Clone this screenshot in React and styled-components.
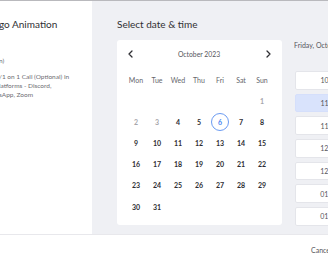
import React from "react";
import styled, { createGlobalStyle } from "styled-components";

const Global = createGlobalStyle`
  html, body { margin: 0; padding: 0; overflow: hidden; background: #fff; }
  body { width: 328px; height: 264px; font-family: "Lato", "Noto Sans", sans-serif; }
  * { box-sizing: border-box; }
`;

const Modal = styled.div`
  width: 328px;
  height: 264px;
  display: flex;
  flex-direction: column;
  border-top: 1px solid #b9b9bd;
  background: #fff;
  overflow: hidden;
`;

const Body = styled.div`
  display: flex;
  height: 233px;
  flex-shrink: 0;
`;

const Summary = styled.div`
  width: 92px;
  flex-shrink: 0;
  overflow: hidden;
  padding-top: 16px;
  white-space: nowrap;
`;

const ServiceTitle = styled.div`
  margin-left: -1px;
  font-size: 10px;
  line-height: 14px;
  color: #2f2f33;
`;

const Meta = styled.div`
  margin-left: -1px;
  margin-top: ${(p) => p.$gap || 0}px;
  font-size: 6.5px;
  line-height: 9px;
  color: #6c6c72;
`;

const Scheduler = styled.div`
  flex: 1;
  min-width: 0;
  background: #eff0f4;
  padding: 16px 0 0 25px;
`;

const Heading = styled.div`
  font-size: 10px;
  line-height: 14px;
  color: #2f2f33;
`;

const Content = styled.div`
  display: flex;
  align-items: flex-start;
  gap: 11px;
  margin-top: 9px;
`;

const Card = styled.div`
  width: 165px;
  height: 185px;
  flex-shrink: 0;
  background: #fff;
  border-radius: 3px;
  padding: 7px 9.5px 0 8.5px;
`;

const MonthBar = styled.div`
  display: flex;
  align-items: center;
  justify-content: space-between;
  height: 14px;
  margin: 0 -2px;
  padding: 0 2.5px;
  font-size: 6.8px;
  color: #55555b;
`;

const NavButton = styled.span`
  display: flex;
  align-items: center;
  justify-content: center;
  width: 8px;
  height: 10px;
`;

const Grid = styled.div`
  display: grid;
  grid-template-columns: repeat(7, 21px);
  grid-template-rows: 20px;
  grid-auto-rows: 21.2px;
  margin-top: 9px;
`;

const WeekDay = styled.div`
  display: flex;
  align-items: center;
  justify-content: center;
  font-size: 7px;
  color: #66666c;
`;

const Day = styled.div`
  display: flex;
  align-items: center;
  justify-content: center;
  font-size: 7px;
  font-weight: 700;
  color: ${(p) => (p.$muted ? "#a6a6ab" : p.$selected ? "#4a85f0" : "#2e2e33")};
`;

const DayMark = styled.span`
  display: flex;
  align-items: center;
  justify-content: center;
  width: 18px;
  height: 18px;
  border-radius: 50%;
  border: ${(p) => (p.$selected ? "1.5px solid #6b9bf2" : "none")};
`;

const TimeColumn = styled.div`
  width: 100px;
  flex-shrink: 0;
`;

const DateLabel = styled.div`
  margin-left: 1px;
  font-size: 7px;
  line-height: 10px;
  color: #55555b;
  white-space: nowrap;
`;

const SlotList = styled.div`
  display: flex;
  flex-direction: column;
  gap: 4.2px;
  margin-top: 21px;
  margin-left: 2px;
  height: 159px;
  overflow: hidden;
`;

const Slot = styled.div`
  flex-shrink: 0;
  width: 78px;
  height: 18.5px;
  border-radius: 2px;
  border: 1px solid ${(p) => (p.$active ? "#d5dffb" : "#e4e5ea")};
  background: ${(p) => (p.$active ? "#d9e3fc" : "#fff")};
  display: flex;
  align-items: center;
  justify-content: center;
  font-size: 7px;
  color: #55555b;
`;

const Footer = styled.div`
  flex: 1;
  border-top: 1px solid #e8e8ec;
  display: flex;
  align-items: center;
  padding-left: 311px;
  white-space: nowrap;
`;

const CancelButton = styled.span`
  font-size: 7px;
  color: #55555b;
`;

const Chevron = ({ dir }) => (
  <svg width="5" height="8" viewBox="0 0 5 8">
    <path
      d={dir === "left" ? "M4 1 L1 4 L4 7" : "M1 1 L4 4 L1 7"}
      fill="none"
      stroke="#2e2e33"
      strokeWidth="1.3"
      strokeLinecap="round"
      strokeLinejoin="round"
    />
  </svg>
);

const weekDays = ["Mon", "Tue", "Wed", "Thu", "Fri", "Sat", "Sun"];
const slots = ["10:30am", "11:00am", "11:30am", "12:00pm", "12:30pm", "01:00pm", "01:30pm", "02:00pm"];

export default function App() {
  const cells = [];
  for (let i = 0; i < 6; i++) cells.push(null);
  for (let d = 1; d <= 31; d++) cells.push(d);

  return (
    <>
      <Global />
      <Modal>
        <Body>
          <Summary>
            <ServiceTitle>go Animation</ServiceTitle>
            <Meta $gap={25}>n)</Meta>
            <Meta $gap={7}>/1 on 1 Call (Optional) in</Meta>
            <Meta>latforms - Discord,</Meta>
            <Meta>sApp, Zoom</Meta>
          </Summary>
          <Scheduler>
            <Heading>Select date &amp; time</Heading>
            <Content>
              <Card>
                <MonthBar>
                  <NavButton><Chevron dir="left" /></NavButton>
                  <span>October 2023</span>
                  <NavButton><Chevron dir="right" /></NavButton>
                </MonthBar>
                <Grid>
                  {weekDays.map((w) => (
                    <WeekDay key={w}>{w}</WeekDay>
                  ))}
                  {cells.map((d, i) => (
                    <Day key={i} $muted={d !== null && d < 4} $selected={d === 6}>
                      {d !== null && <DayMark $selected={d === 6}>{d}</DayMark>}
                    </Day>
                  ))}
                </Grid>
              </Card>
              <TimeColumn>
                <DateLabel>Friday, October 6</DateLabel>
                <SlotList>
                  {slots.map((s, i) => (
                    <Slot key={s} $active={i === 1}>{s}</Slot>
                  ))}
                </SlotList>
              </TimeColumn>
            </Content>
          </Scheduler>
        </Body>
        <Footer>
          <CancelButton>Cancel</CancelButton>
        </Footer>
      </Modal>
    </>
  );
}
